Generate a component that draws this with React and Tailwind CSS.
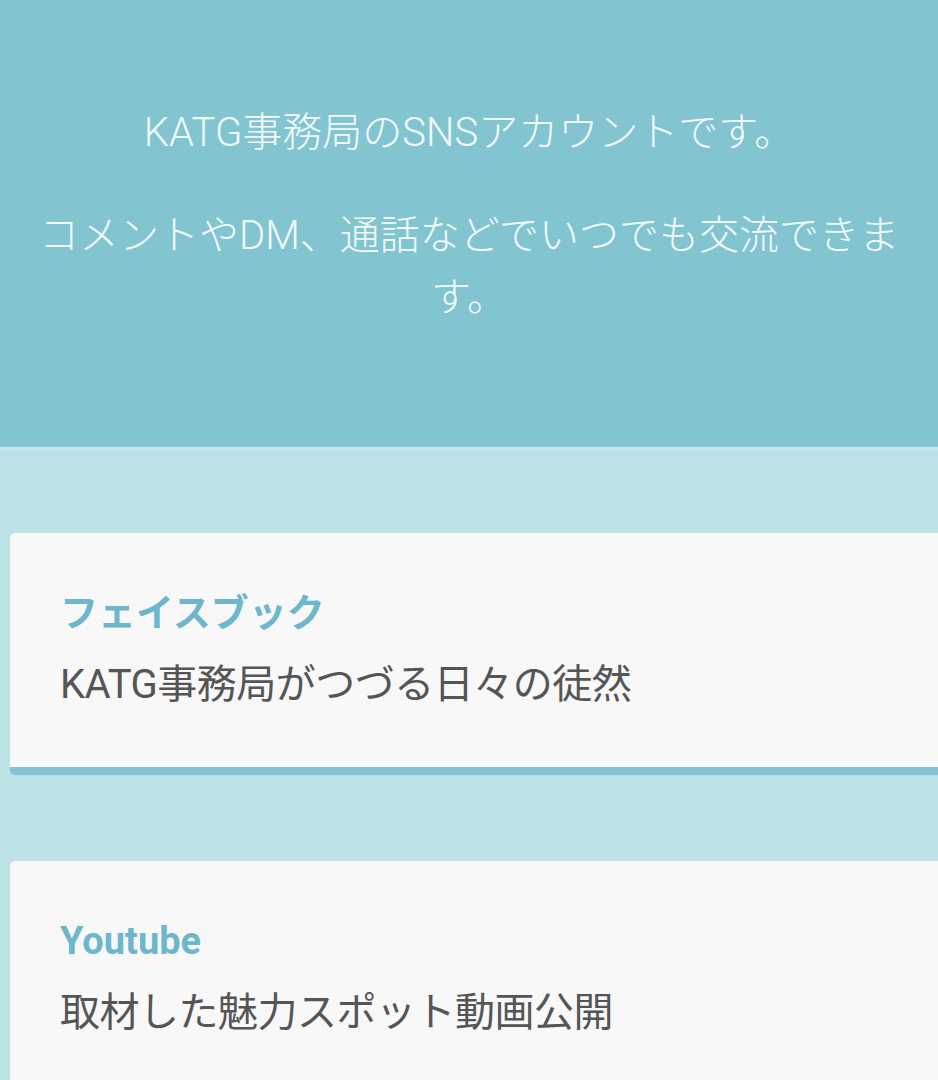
const cards = [
  { title: "フェイスブック", text: "KATG事務局がつづる日々の徒然" },
  { title: "Youtube", text: "取材した魅力スポット動画公開" },
];

const SnsCard = ({ title, text }) => (
  <div className="ml-[10px] w-[960px] rounded-[5px] bg-[#f8f8f8] border-b-[8px] border-[#82c4cf] pl-[50px] pt-[52px] pb-[52px]">
    <h2 className="text-[38px] leading-[57px] font-bold text-[#6db6cb]">
      {title}
    </h2>
    <p className="mt-[13px] text-[40px] leading-[60px] tracking-[-0.5px] text-[#555555]">
      {text}
    </p>
  </div>
);

export default function App() {
  return (
    <div
      className="w-full min-h-[1080px] overflow-hidden bg-[#bde2e6]"
      style={{ fontFamily: '"Roboto", "Noto Sans CJK JP", sans-serif' }}
    >
      {/* Header */}
      <header className="bg-[#82c4cf] border-b-[3px] border-[#c3e8ee] px-[30px] pt-[103px] pb-[118px] text-center text-[#f2fafb] font-light">
        <p className="text-[40px] leading-[60px]">KATG事務局のSNSアカウントです。</p>
        <p className="mt-[42px] text-[40px] leading-[62px]">
          コメントやDM、通話などでいつでも交流できます。
        </p>
      </header>

      {/* Cards */}
      <div className="flex flex-col gap-[86px] pt-[83px]">
        {cards.map((c) => (
          <SnsCard key={c.title} title={c.title} text={c.text} />
        ))}
      </div>
    </div>
  );
}
